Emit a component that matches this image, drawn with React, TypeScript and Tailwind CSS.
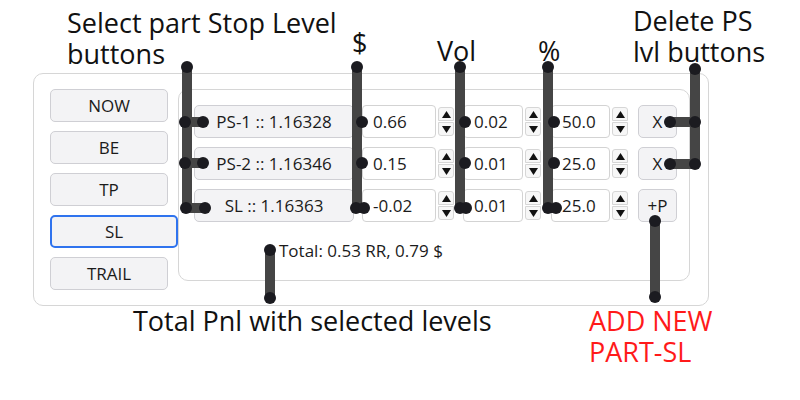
import React from "react";

const uiFont = { fontFamily: '"Open Sans", "Noto Sans", sans-serif' };

const btnBase =
	"flex items-center justify-center h-[33px] rounded-[5px] bg-[#f3f3f5] text-[17px] text-[#1b1b1b]";
const btn = `${btnBase} border border-[#cfcfd4]`;

function Spinner() {
	return (
		<div className="ml-[2px] flex flex-col gap-[1px] w-[16px] h-[29px]">
			<div className="flex-1 flex items-center justify-center rounded-t-[3px] border border-[#d6d6d6] bg-[#f7f7f7]">
				<svg width="9" height="7" viewBox="0 0 9 7">
					<path d="M4.5 0 L9 7 L0 7 Z" fill="#111" />
				</svg>
			</div>
			<div className="flex-1 flex items-center justify-center rounded-b-[3px] border border-[#d6d6d6] bg-[#f7f7f7]">
				<svg width="9" height="7" viewBox="0 0 9 7">
					<path d="M0 0 L9 0 L4.5 7 Z" fill="#111" />
				</svg>
			</div>
		</div>
	);
}

function NumField({ value, w, gap }: { value: string; w: string; gap: string }) {
	return (
		<>
			<div
				className={`${gap} ${w} h-[33px] flex items-center pl-[10px] rounded-[4px] border border-[#d3d3d3] bg-white text-[17px] text-[#1b1b1b]`}
			>
				{value}
			</div>
			<Spinner />
		</>
	);
}

type Row = { label: string; usd: string; vol: string; pct: string; action: string };

const rows: Row[] = [
	{ label: "PS-1 :: 1.16328", usd: "0.66", vol: "0.02", pct: "50.0", action: "X" },
	{ label: "PS-2 :: 1.16346", usd: "0.15", vol: "0.01", pct: "25.0", action: "X" },
	{ label: "SL :: 1.16363", usd: "-0.02", vol: "0.01", pct: "25.0", action: "+P" },
];

function Label({
	className,
	children,
}: {
	className: string;
	children: React.ReactNode;
}) {
	return (
		<div className={`absolute text-[27px] leading-[31px] whitespace-nowrap ${className}`}>
			{children}
		</div>
	);
}

// callout strokes laid over the panel
function Callouts() {
	const line = "#454545";
	const dot = "#1b1b20";
	const segs: [number, number, number, number][] = [
		[187, 67, 187, 208],
		[187, 122, 203, 122],
		[187, 163, 203, 163],
		[187, 208, 205, 208],
		[357, 67, 357, 208],
		[357, 122, 362, 122],
		[357, 163, 362, 163],
		[357, 208, 364, 208],
		[460, 67, 460, 208],
		[460, 122, 465, 122],
		[460, 163, 465, 163],
		[460, 208, 465, 208],
		[548, 67, 548, 208],
		[548, 122, 554, 122],
		[548, 163, 554, 163],
		[548, 208, 556, 208],
		[695, 69, 695, 164],
		[670, 122, 695, 122],
		[670, 164, 695, 164],
		[655, 221, 655, 297],
		[270, 250, 270, 298],
	];
	const dots: [number, number][] = [
		[187, 67], [185, 122], [203, 122], [185, 163], [203, 163], [186, 208], [205, 208],
		[357, 67], [362, 122], [362, 163], [356, 208], [364, 208],
		[460, 67], [465, 122], [465, 163], [460, 208], [466, 208],
		[548, 67], [554, 122], [554, 163], [548, 208], [556, 208],
		[695, 69], [670, 122], [695, 122], [670, 164], [695, 164],
		[655, 221], [655, 297],
		[270, 250], [270, 298],
	];
	return (
		<svg className="absolute inset-0 pointer-events-none" width="800" height="400">
			{segs.map(([x1, y1, x2, y2], i) => (
				<line
					key={i}
					x1={x1}
					y1={y1}
					x2={x2}
					y2={y2}
					stroke={line}
					strokeWidth="10"
					strokeLinecap="round"
				/>
			))}
			{dots.map(([cx, cy], i) => (
				<circle key={i} cx={cx} cy={cy} r="6" fill={dot} />
			))}
		</svg>
	);
}

export default function App() {
	return (
		<div className="relative w-[800px] h-[400px] bg-white overflow-hidden" style={uiFont}>
			{/* Stop-level panel */}
			<div className="ml-[33px] pt-[73px]">
				<div className="w-[676px] h-[233px] rounded-[10px] border border-[#d6d6d6] flex pt-[15px] pl-[16px] pr-[18px]">
					{/* Mode buttons */}
					<div className="w-[128px] flex flex-col gap-[9px]">
						<div className={`${btn} w-[118px]`}>NOW</div>
						<div className={`${btn} w-[118px]`}>BE</div>
						<div className={`${btn} w-[118px]`}>TP</div>
						<div className={`${btnBase} w-[128px] border-2 border-[#2f73ee]`}>SL</div>
						<div className={`${btn} w-[118px]`}>TRAIL</div>
					</div>

					{/* Part stop levels */}
					<div className="w-[513px] h-[192px] rounded-[10px] border border-[#d6d6d6] pt-[15px] pl-[15px]">
						<div className="flex flex-col gap-[9px]">
							{rows.map((r) => (
								<div key={r.label} className="flex items-center h-[33px]">
									<div className={`${btn} w-[160px]`}>{r.label}</div>
									<NumField value={r.usd} w="w-[74px]" gap="ml-[8px]" />
									<NumField value={r.vol} w="w-[60px]" gap="ml-[9px]" />
									<NumField value={r.pct} w="w-[59px]" gap="ml-[10px]" />
									<div className={`${btn} ml-[10px] w-[39px]`}>{r.action}</div>
								</div>
							))}
						</div>
						<div className="mt-[16px] ml-[85px] text-[17px] text-[#1b1b1b]">
							Total: 0.53 RR, 0.79 $
						</div>
					</div>
				</div>
			</div>

			<Callouts />

			{/* Annotation labels */}
			<Label className="left-[67px] top-[7px] text-[#111]">
				Select part Stop Level
				<br />
				buttons
			</Label>
			<Label className="left-[352px] top-[27px] text-[#111]">$</Label>
			<Label className="left-[437px] top-[35px] text-[#111]">Vol</Label>
			<Label className="left-[538px] top-[35px] text-[#111]">%</Label>
			<Label className="left-[633px] top-[5px] text-[#111]">
				Delete PS
				<br />
				lvl buttons
			</Label>
			<Label className="left-[133px] top-[305px] text-[#111]">
				Total Pnl with selected levels
			</Label>
			<Label className="left-[589px] top-[305px] text-[#ff1a1a]">
				ADD NEW
				<br />
				PART-SL
			</Label>
		</div>
	);
}
